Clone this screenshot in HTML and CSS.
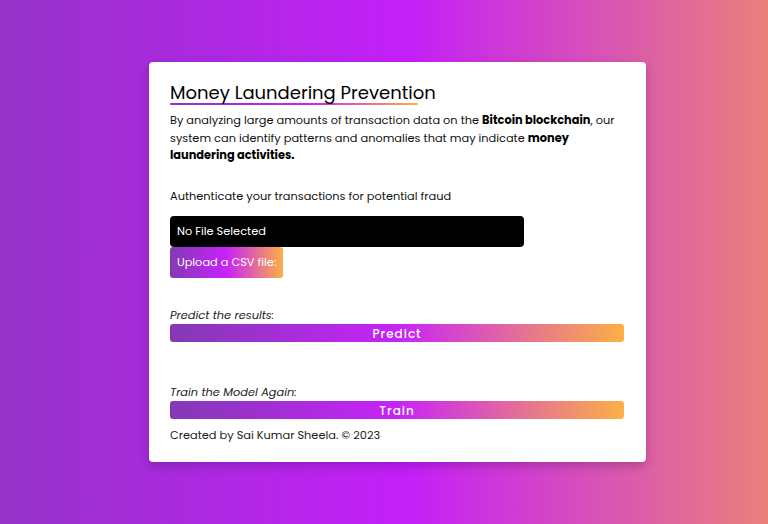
FILE: index.html
```html
<!DOCTYPE html>
<html lang="en">
<head>
<meta charset="utf-8">
<title>Money Laundering Prevention</title>
<link rel="stylesheet" href="styles.css">
</head>
<body>
<div class="page">
  <main class="card">
    <h1 class="title">Money Laundering Prevention</h1>
    <div class="title-bar"></div>
    <p class="intro">By analyzing large amounts of transaction data on the <b>Bitcoin blockchain</b>, our system can identify patterns and anomalies that may indicate <b>money laundering activities.</b></p>
    <p class="auth">Authenticate your transactions for potential fraud</p>
    <div class="file-box">No File Selected</div>
    <div class="upload-row"><span class="upload-btn">Upload a CSV file:</span></div>
    <p class="label predict-label">Predict the results:</p>
    <div class="wide-btn">Predict</div>
    <p class="label train-label">Train the Model Again:</p>
    <div class="wide-btn">Train</div>
    <p class="footer">Created by Sai Kumar Sheela. © 2023</p>
  </main>
</div>
</body>
</html>
```
FILE: styles.css
```css
* { box-sizing: border-box; }
html, body { margin: 0; padding: 0; }
body {
  width: 768px;
  height: 524px;
  overflow: hidden;
  font-family: "Poppins", "Open Sans", sans-serif;
  color: #111;
  background: linear-gradient(to right, #9533c9 0%, #c41ff8 53%, #ea807b 100%);
}
.page {
  height: 524px;
  display: flex;
  align-items: center;
  justify-content: center;
  padding-left: 27px;
}
.card {
  width: 497px;
  height: 400px;
  background: #fff;
  border-radius: 4px;
  box-shadow: 0 4px 10px rgba(40, 0, 60, 0.25);
  padding: 20px 22px 0 21px;
}
.title {
  margin: 0;
  font-size: 18px;
  font-weight: 400;
  line-height: 21px;
  color: #000;
}
.title-bar {
  width: 248px;
  height: 2px;
  margin-top: 0;
  border-radius: 1px;
  background: linear-gradient(to right, #833ab4, #c822f9 55%, #fcb045);
}
.intro {
  margin: 7px 0 0;
  font-size: 11.35px;
  line-height: 17.5px;
  color: #111;
}
.intro b { font-weight: 700; color: #000; }
.auth {
  margin: 22px 0 0;
  font-size: 11.35px;
  line-height: 18px;
}
.file-box {
  margin-top: 11px;
  width: 354px;
  height: 31px;
  background: #000;
  color: #fff;
  border-radius: 4px;
  font-size: 11.35px;
  line-height: 31px;
  padding-left: 7px;
}
.upload-row { display: flex; }
.upload-btn {
  height: 31px;
  width: 113px;
  border-radius: 3px;
  background: linear-gradient(to right, #833ab4, #c822f9 50%, #fcb045);
  color: #fff;
  font-size: 11.35px;
  line-height: 31px;
  padding-left: 7px;
  white-space: nowrap;
}
.label {
  margin: 0;
  font-size: 11.35px;
  font-style: italic;
  line-height: 18px;
  color: #222;
}
.predict-label { margin-top: 28px; }
.train-label { margin-top: 41px; }
.wide-btn {
  height: 18px;
  border-radius: 3px;
  background: linear-gradient(to right, #833ab4, #c822f9 50%, #fcb045);
  color: #fff;
  text-align: center;
  font-size: 12px;
  font-weight: 500;
  letter-spacing: 1px;
  line-height: 19px;
}
.footer {
  margin: 7px 0 0;
  font-size: 11.35px;
  line-height: 18px;
  color: #222;
}
```
